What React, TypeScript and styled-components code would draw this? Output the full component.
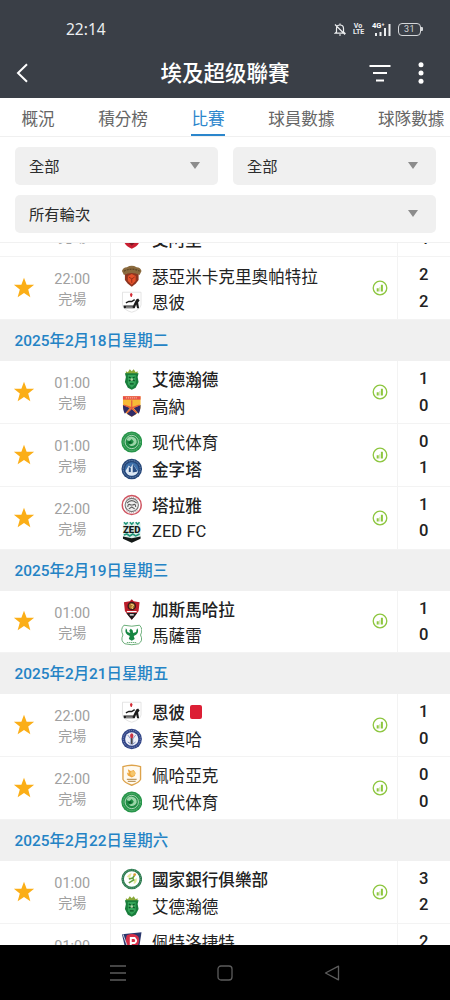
import React from 'react';
import styled, { createGlobalStyle } from 'styled-components';

type CrestName =
    | 'ahly' | 'ceramica' | 'enppi' | 'ittihad' | 'gouna' | 'modern' | 'pyramids'
    | 'talaea' | 'zed' | 'ghazl' | 'masry' | 'smouha' | 'pharco' | 'bank' | 'petrojet';

interface Team {
    name: string;
    crest: CrestName;
    score: number;
    winner?: boolean;
    redCard?: boolean;
}

interface Match {
    time: string;
    home: Team;
    away: Team;
}

interface MatchDay {
    date?: string;
    matches: Match[];
}

const GlobalStyle = createGlobalStyle`
  * {
    box-sizing: border-box;
  }

  body {
    margin: 0;
    background: #fff;
    font-family: Roboto, 'Noto Sans CJK TC', sans-serif;
  }
`;

const Screen = styled.div`
  display: flex;
  flex-direction: column;
  width: 450px;
  height: 1000px;
  overflow: hidden;
  background: #fff;
`;

const TopArea = styled.header`
  flex: none;
  height: 98px;
  background: #3a3f47;
  color: #fff;
`;

const StatusBar = styled.div`
  display: flex;
  align-items: center;
  justify-content: space-between;
  height: 46px;
  padding: 12px 27px 0 66px;
`;

const Clock = styled.span`
  font-family: 'Noto Sans', sans-serif;
  font-size: 15.5px;
  line-height: 20px;
  color: #eceef0;
`;

const StatusIcons = styled.div`
  display: flex;
  align-items: center;
`;

const VoLte = styled.span`
  display: flex;
  flex-direction: column;
  width: 10px;
  margin: 0 9px 0 7px;
  font-size: 7px;
  font-weight: 700;
  line-height: 6.5px;
  text-align: center;
  color: #eceef0;
`;

const Network = styled.span`
  position: relative;
  width: 19px;
  height: 14px;
  margin-right: 7px;
`;

const NetworkLabel = styled.span`
  position: absolute;
  top: 0;
  left: 0;
  font-size: 7.5px;
  font-weight: 700;
  line-height: 7px;
  white-space: nowrap;
`;

const Battery = styled.span`
  display: flex;
  align-items: center;
  justify-content: center;
  width: 23px;
  height: 13px;
  border: 1.5px solid #d4d6d9;
  border-radius: 4px;
  font-size: 9px;
  line-height: 9px;
  letter-spacing: 0.4px;
  color: #d4d6d9;
`;

const BatteryTip = styled.span`
  width: 2px;
  height: 4px;
  border-radius: 0 1px 1px 0;
  background: #d4d6d9;
`;

const TitleBar = styled.div`
  display: grid;
  grid-template-columns: 70px 1fr 70px;
  align-items: center;
  height: 52px;
  padding: 1px 16px 0;
`;

const Title = styled.h1`
  margin: 0;
  padding-top: 2px;
  font-size: 21.5px;
  font-weight: 500;
  line-height: 30px;
  text-align: center;
  white-space: nowrap;
`;

const TitleActions = styled.div`
  display: flex;
  align-items: center;
  justify-content: flex-end;
  gap: 23px;
  padding-right: 4px;
`;

const Tabs = styled.nav`
  display: flex;
  flex: none;
  gap: 43.5px;
  height: 39px;
  padding-left: 21.5px;
  border-bottom: 1px solid #f0f0f0;
  overflow: hidden;
`;

const Tab = styled.div<{ $active?: boolean }>`
  flex: none;
  height: 39px;
  border-bottom: 3px solid ${({ $active }) => ($active ? '#2b86cc' : 'transparent')};
  font-size: 16.6px;
  line-height: 43px;
  white-space: nowrap;
  color: ${({ $active }) => ($active ? '#2b86cc' : '#666')};
`;

const Filters = styled.div`
  display: grid;
  flex: none;
  grid-template-columns: 1fr 1fr;
  gap: 10px 15px;
  height: 104.5px;
  padding: 10px 14.5px 9px;
`;

const Select = styled.div<{ $wide?: boolean }>`
  display: flex;
  grid-column: ${({ $wide }) => ($wide ? '1 / -1' : 'auto')};
  align-items: center;
  justify-content: space-between;
  height: 38px;
  padding: 0 18px 2px 14.5px;
  border-radius: 5px;
  background: #f0f0f0;
  font-size: 15.3px;
  color: #2c2c2c;
`;

const Caret = styled.span`
  margin-top: 1px;
  border-top: 7px solid #8c8c8c;
  border-right: 5.5px solid transparent;
  border-left: 5.5px solid transparent;
`;

const List = styled.main`
  flex: 1;
  min-height: 0;
  overflow: hidden;
  border-top: 1px solid #f1f1f1;
`;

/* the list is scrolled so that the first match is mostly above the fold */
const Scrolled = styled.div`
  margin-top: -48px;
`;

const DateHeading = styled.h2`
  height: 40.9px;
  margin: 0;
  padding-left: 14.5px;
  background: #f0f0f0;
  font-size: 15.4px;
  font-weight: 500;
  line-height: 42px;
  color: #2483c5;
`;

const Row = styled.article`
  display: grid;
  grid-template-columns: 48px 62.5px 1fr 34px 52.5px;
  height: 62.85px;
  border-bottom: 1px solid #f3f3f3;
`;

const StarCell = styled.div`
  display: flex;
  align-items: center;
  justify-content: center;
`;

const TimeCell = styled.div`
  display: flex;
  flex-direction: column;
  align-items: center;
  padding: 13px 13px 0 0;
  border-right: 1px solid #f0f0f0;
  font-size: 14px;
  line-height: 20px;
  color: #a0a0a0;
`;

const KickOff = styled.span`
  height: 20px;
  font-size: 14.4px;
`;

const Status = styled.span`
  height: 20px;
  line-height: 19px;
`;

const Teams = styled.div`
  display: flex;
  flex-direction: column;
  padding: 5px 0 0 10px;
`;

const TeamLine = styled.div<{ $winner?: boolean }>`
  display: flex;
  align-items: center;
  height: 26.5px;
  font-size: 16.6px;
  font-weight: ${({ $winner }) => ($winner ? 500 : 400)};
  white-space: nowrap;
  color: #222;

  svg {
    flex: none;
    margin-right: 10px;
  }
`;

const RedCard = styled.span`
  width: 12px;
  height: 14px;
  margin-left: 5px;
  border-radius: 2px;
  background: #dc1f35;
`;

const StatsCell = styled.div`
  display: flex;
  align-items: center;
  justify-content: center;
  border-right: 1px solid #f3f3f3;
`;

const Scores = styled.div`
  display: flex;
  flex-direction: column;
  align-items: center;
  padding-top: 5px;
  font-size: 16.6px;
  font-weight: 500;
  line-height: 26.5px;
  color: #222;
`;

const NavBar = styled.footer`
  display: flex;
  flex: none;
  align-items: center;
  justify-content: center;
  gap: 91px;
  height: 55px;
  background: #000;
`;

const crests: Record<CrestName, React.ReactNode> = {
    ahly: (
        <>
            <path d="M3 2h16v11q-1 5-8 8q-7-3-8-8z" fill="#c91f32" />
            <path d="M6 13h10l-5 5z" fill="#7d1722" />
        </>
    ),
    ceramica: (
        <>
            <path d="M4 9q7-4 14 0v6l-3 4-4 3-4-3-3-4z" fill="#8d3520" />
            <path d="M1 6Q2 2 6 2q5-3 10 0q4 0 5 4l-2 4q-8-4-16 0z" fill="#8a6a3e" />
            <path d="M3 6q8-4 16 0" fill="none" stroke="#5d4526" strokeWidth="1.2" strokeDasharray="2 1" />
            <path d="M7 11l4-2 4 2v5l-4 4-4-4z" fill="#e4512a" />
            <path d="M8 12l3 2 3-2M11 14v4" fill="none" stroke="#9b2c17" />
        </>
    ),
    enppi: (
        <>
            <path d="M1.500 1h19v13q-1 5-9.500 7.500Q2.500 19 1.500 14z" fill="#fff" stroke="#ddd" strokeWidth=".8" />
            <path d="M10.500 2v4" stroke="#d32c35" strokeWidth="1.300" />
            <circle cx="10.500" cy="3.700" r="1.300" fill="#d32c35" />
            <path d="M2.500 14.500h10l3-6 2-1 1.500 2-1.500 2 1 6h-2l-1-4-1.500 4h-11z" fill="#1c1c1c" />
            <path d="M5 12l3-1.500h3l3-2" fill="none" stroke="#1c1c1c" strokeWidth="1.400" />
            <path d="M5 16.200h7" stroke="#fff" strokeWidth=".8" />
        </>
    ),
    ittihad: (
        <>
            <path d="M5 3l2 1 2-3 2 2 2-2 2 3 2-1v3H5z" fill="#89a838" />
            <path d="M4 5h14l-1 4 1 5-3 6-4 2-4-2-3-6 1-5z" fill="#187d3b" />
            <path d="M7 7h8v9l-4 4-4-4z" fill="#35a559" />
            <path d="M8 9l2 1M14 9l-2 1M8 13q3-2 6 0M9 16h4" stroke="#0b5425" strokeWidth="1.300" fill="none" />
            <circle cx="11" cy="11.500" r="1.300" fill="#b8d7a8" />
        </>
    ),
    gouna: (
        <>
            <path d="M2 1h18v12q-1 5-9 9q-8-4-9-9z" fill="#f6bb37" />
            <path d="M2 1h18v3.500H2z" fill="#e8504b" />
            <path d="M2 10l7 3-5 6q-2-3-2-9zM20 10l-7 3 5 6q2-3 2-9zM11 14l5 5-5 3-5-3z" fill="#302b67" />
            <path d="M11 5v9M6 18l5-5 5 5M3 10l8 3 8-3" fill="none" stroke="#e45b42" strokeWidth="1.300" />
            <path d="M5 2.700h12" stroke="#fbd3a0" strokeDasharray="1.200 .8" />
        </>
    ),
    modern: (
        <>
            <circle cx="11" cy="11" r="10.700" fill="#27954a" />
            <circle cx="11" cy="11" r="8.800" fill="none" stroke="#6dbb84" strokeDasharray="1 1" />
            <circle cx="11" cy="11" r="6.800" fill="#1f8b43" stroke="#cfe8d5" strokeWidth=".8" />
            <path d="M5.500 9q2-4 6-3.500q5 1 4.500 6q-1.500 4-6 3.500l-2-1.500q4.500 0 5-3l-2-2.500-2.500 2z" fill="#9bd6a8" />
            <path d="M7 11l3-1 1 2-2 1z" fill="#0d602b" />
        </>
    ),
    pyramids: (
        <>
            <circle cx="11" cy="11" r="10.500" fill="#254678" />
            <circle cx="11" cy="11" r="8.700" fill="none" stroke="#7792b9" strokeDasharray="1 .8" />
            <circle cx="11" cy="11" r="7" fill="#3d6fa9" />
            <path d="M4.500 13L8 7.500l2 2 2-4 5.500 8q-2 4.500-6.500 4.500t-6.500-5z" fill="#dce7f3" />
            <path d="M12 5.500v9l5-1zM8 9v5h2v-4z" fill="#294d82" />
        </>
    ),
    talaea: (
        <>
            <circle cx="11" cy="11" r="9.700" fill="#fff" stroke="#cf5360" strokeWidth="1.500" />
            <circle cx="11" cy="11" r="6.800" fill="#eee" stroke="#777" strokeWidth="1.100" />
            <path d="M6 9q5-5 10 0M7 13q0-4 3-2h2q3-2 3 2M8 15l3-2 3 2" fill="none" stroke="#5c5c5c" strokeWidth="1.100" />
            <path d="M5 5.500q6-5 12 0M5 16.500q6 5 12 0" fill="none" stroke="#a98b8d" strokeDasharray="1 1" />
        </>
    ),
    zed: (
        <>
            <path d="M2 2h18v15l-9 5-9-5z" fill="#dbeee8" />
            <path d="M3 1l2 2 2-2M9 1l2 2 2-2M15 1l2 2 2-2M3 14l3-1 3 2 3-2 3 2 4-2" fill="none" stroke="#20977a" strokeWidth="1.700" />
            <path d="M2 15.500l9 2 9-2v2.500l-9 4-9-4z" fill="#141918" />
            <text x="11" y="12" textAnchor="middle" textLength="18" lengthAdjust="spacingAndGlyphs" fontFamily="Roboto" fontSize="9" fontWeight="900" fill="#141918">ZED</text>
        </>
    ),
    ghazl: (
        <>
            <path d="M11 1l2 2 6 1-1 9-3 4-4 5-4-5-3-4-1-9 6-1z" fill="#bc1d29" />
            <circle cx="11" cy="8" r="4.400" fill="#3a171b" />
            <circle cx="11" cy="8" r="3" fill="#b0742d" />
            <path d="M10 6l3 1-2 2 1 2" fill="none" stroke="#f2d47b" />
            <path d="M5.500 15h11l-2 3-3.500 4-3.500-4z" fill="#201c1e" />
            <path d="M6 13.700h10M9 17h4" stroke="#fff" strokeWidth="1.200" />
        </>
    ),
    masry: (
        <>
            <path d="M3 1q8 2 16 0q4 4 1 10q3 6-2 9q-7 2-14 0q-5-3-2-9q-3-6 1-10z" fill="#fff" stroke="#58a368" strokeWidth=".9" />
            <path d="M5 4Q3 10 9 12l-1 3 3 2 3-2-1-3q6-2 4-8q-1.500 1-1.500 4l-3 1q0-3.500-2.500-4.500l-1.500 2 1 2.500-3-1q0-3-1.500-4z" fill="#168642" />
            <path d="M6 18.700h10" stroke="#6cae79" strokeDasharray="1.500 .5" />
        </>
    ),
    smouha: (
        <>
            <circle cx="11" cy="11" r="10.400" fill="#304486" />
            <circle cx="11" cy="11" r="8.700" fill="none" stroke="#8c98c2" strokeDasharray="1 1" />
            <circle cx="11" cy="11" r="6.800" fill="#eef0f8" />
            <path d="M7 7l3 4v5M15 7l-3 4v5M7 14l4 3 4-3" fill="none" stroke="#8794be" />
            <path d="M11 10v6" stroke="#444" strokeWidth="1.500" />
            <ellipse cx="11" cy="7.800" rx="1.700" ry="2.600" fill="#c93445" />
        </>
    ),
    pharco: (
        <>
            <path d="M2 2.500q9-3 18 0v13q-1 3-9 6q-8-3-9-6z" fill="#fffaf0" stroke="#dda34b" strokeWidth="1.400" />
            <path d="M7 5l3 2 3-1 2 3-1 3-3 1.500-4-2-1-3 2 1z" fill="#eda63c" />
            <circle cx="12" cy="9.500" r="2.500" fill="#f6c76b" />
            <path d="M6 15.500h10M7 17.500h8" stroke="#bd9a62" strokeWidth="1.100" />
        </>
    ),
    bank: (
        <>
            <circle cx="11" cy="11" r="9.300" fill="#fff" stroke="#2b7a4e" strokeWidth="2.600" />
            <circle cx="11" cy="11" r="9.300" fill="none" stroke="#8db99d" strokeWidth=".7" strokeDasharray="1 1" />
            <path d="M6 9q2-4 5-4l-2 5zM13 16q4-1 3-6l-3 2z" fill="#e6e79b" />
            <path d="M14 7l-2 3-4 1M12 10l1 2-5 3" fill="none" stroke="#65a13e" strokeWidth="1.600" />
            <circle cx="14" cy="6.500" r="1.400" fill="#df9c35" />
        </>
    ),
    petrojet: (
        <>
            <path d="M1 3l20-2-2 13-8 8-7-6z" fill="#29366c" />
            <path d="M6 4q8-3 12 2 2 7-4 12l-6-1q-5-6-2-13z" fill="#d62f48" />
            <path d="M10 17V7h4q3 3 0 5h-4" fill="none" stroke="#fff" strokeWidth="2" />
            <path d="M2 3l5 14" stroke="#dce0ee" strokeWidth=".9" />
        </>
    ),
};

const Crest: React.FC<{ name: CrestName }> = ({ name }) => (
    <svg width="21.5" height="22" viewBox="0 0 22 22">{crests[name]}</svg>
);

const Star = () => (
    <svg width="22" height="22" viewBox="0 0 22 22">
        <path d="M11 .8l2.650 7h7.500l-5.950 4.700 2.150 7.800L11 15.900l-6.350 4.400 2.150-7.800L.85 7.800h7.500z" fill="#fbae17" />
    </svg>
);

const StatsIcon = () => (
    <svg width="16" height="16" viewBox="0 0 16 16" fill="none" stroke="#8dc63f">
        <circle cx="8" cy="8" r="6.800" strokeWidth="1.300" />
        <path d="M5.700 8.200v3.300M9.900 4.800v6.700" strokeWidth="2" />
        <path d="M7.800 7.200v4.300" strokeWidth="1" strokeOpacity=".5" />
    </svg>
);

const MutedBell = () => (
    <svg width="12" height="13" viewBox="0 0 12 13" fill="none" stroke="#eceef0" strokeWidth="1.200">
        <path d="M2.500 9V5.500Q2.500 2 6 2t3.500 3.500V9l1.300 1.200H1.200zM6 .6V2M5 12h2M1 1.500l10 10" />
    </svg>
);

const seasonDays: MatchDay[] = [
    {
        matches: [
            {
                time: '22:00',
                home: { name: '塔拉雅', crest: 'talaea', score: 0 },
                away: { name: '艾阿里', crest: 'ahly', score: 4, winner: true },
            },
            {
                time: '22:00',
                home: { name: '瑟亞米卡克里奧帕特拉', crest: 'ceramica', score: 2 },
                away: { name: '恩彼', crest: 'enppi', score: 2 },
            },
        ],
    },
    {
        date: '2025年2月18日星期二',
        matches: [
            {
                time: '01:00',
                home: { name: '艾德瀚德', crest: 'ittihad', score: 1, winner: true },
                away: { name: '高納', crest: 'gouna', score: 0 },
            },
            {
                time: '01:00',
                home: { name: '现代体育', crest: 'modern', score: 0 },
                away: { name: '金字塔', crest: 'pyramids', score: 1, winner: true },
            },
            {
                time: '22:00',
                home: { name: '塔拉雅', crest: 'talaea', score: 1, winner: true },
                away: { name: 'ZED FC', crest: 'zed', score: 0 },
            },
        ],
    },
    {
        date: '2025年2月19日星期三',
        matches: [
            {
                time: '01:00',
                home: { name: '加斯馬哈拉', crest: 'ghazl', score: 1, winner: true },
                away: { name: '馬薩雷', crest: 'masry', score: 0 },
            },
        ],
    },
    {
        date: '2025年2月21日星期五',
        matches: [
            {
                time: '22:00',
                home: { name: '恩彼', crest: 'enppi', score: 1, winner: true, redCard: true },
                away: { name: '索莫哈', crest: 'smouha', score: 0 },
            },
            {
                time: '22:00',
                home: { name: '佩哈亞克', crest: 'pharco', score: 0 },
                away: { name: '现代体育', crest: 'modern', score: 0 },
            },
        ],
    },
    {
        date: '2025年2月22日星期六',
        matches: [
            {
                time: '01:00',
                home: { name: '國家銀行俱樂部', crest: 'bank', score: 3, winner: true },
                away: { name: '艾德瀚德', crest: 'ittihad', score: 2 },
            },
            {
                time: '01:00',
                home: { name: '佩特洛捷特', crest: 'petrojet', score: 2 },
                away: { name: '高納', crest: 'gouna', score: 2 },
            },
        ],
    },
];

const tabs = ['概況', '積分榜', '比賽', '球員數據', '球隊數據'];

const TeamRow: React.FC<{ team: Team }> = ({ team }) => (
    <TeamLine $winner={team.winner}>
        <Crest name={team.crest} />
        {team.name}
        {team.redCard && <RedCard />}
    </TeamLine>
);

const MatchRow: React.FC<{ match: Match }> = ({ match }) => (
    <Row>
        <StarCell><Star /></StarCell>
        <TimeCell>
            <KickOff>{match.time}</KickOff>
            <Status>完場</Status>
        </TimeCell>
        <Teams>
            <TeamRow team={match.home} />
            <TeamRow team={match.away} />
        </Teams>
        <StatsCell><StatsIcon /></StatsCell>
        <Scores>
            <span>{match.home.score}</span>
            <span>{match.away.score}</span>
        </Scores>
    </Row>
);

const App: React.FC = () => {
    return (
        <>
            <GlobalStyle />
            <Screen>
                <TopArea>
                    <StatusBar>
                        <Clock>22:14</Clock>
                        <StatusIcons>
                            <MutedBell />
                            <VoLte>
                                <span>Vo</span>
                                <span>LTE</span>
                            </VoLte>
                            <Network>
                                <NetworkLabel>4G⁺</NetworkLabel>
                                <svg width="19" height="14" viewBox="0 0 19 14" fill="#eceef0">
                                    <path d="M3 10h2v3H3zM7.500 9h2v4h-2zM12 5h2v8h-2zM16.500 1h2v12h-2z" />
                                </svg>
                            </Network>
                            <Battery>31</Battery>
                            <BatteryTip />
                        </StatusIcons>
                    </StatusBar>
                    <TitleBar>
                        <svg width="13" height="20" viewBox="0 0 13 20" fill="none" stroke="#fff" strokeWidth="2">
                            <path d="M11 1.200L2 10l9 8.800" />
                        </svg>
                        <Title>埃及超级聯賽</Title>
                        <TitleActions>
                            <svg width="22" height="18" viewBox="0 0 22 18" stroke="#fff" strokeWidth="2">
                                <path d="M.5 2h21M4 9h14M7 16.500h8" />
                            </svg>
                            <svg width="16" height="22" viewBox="0 0 16 22" fill="#fff">
                                <circle cx="7" cy="2.700" r="2.500" />
                                <circle cx="7" cy="11" r="2.500" />
                                <circle cx="7" cy="19.300" r="2.500" />
                            </svg>
                        </TitleActions>
                    </TitleBar>
                </TopArea>
                <Tabs>
                    {tabs.map((label) => (
                        <Tab key={label} $active={label === '比賽'}>{label}</Tab>
                    ))}
                </Tabs>
                <Filters>
                    <Select>全部<Caret /></Select>
                    <Select>全部<Caret /></Select>
                    <Select $wide>所有輪次<Caret /></Select>
                </Filters>
                <List>
                    <Scrolled>
                        {seasonDays.map((day, index) => (
                            <section key={index}>
                                {day.date && <DateHeading>{day.date}</DateHeading>}
                                {day.matches.map((match, i) => (
                                    <MatchRow key={i} match={match} />
                                ))}
                            </section>
                        ))}
                    </Scrolled>
                </List>
                <NavBar>
                    <svg width="16" height="16" viewBox="0 0 16 16" stroke="#5c5c5c" strokeWidth="1.300">
                        <path d="M0 1h16M0 8h16M0 15h16" />
                    </svg>
                    <svg width="16" height="16" viewBox="0 0 16 16" fill="none" stroke="#5c5c5c" strokeWidth="1.300">
                        <rect x="1" y="1" width="14" height="14" rx="3" />
                    </svg>
                    <svg width="16" height="16" viewBox="0 0 16 16" fill="none" stroke="#5c5c5c" strokeWidth="1.300">
                        <path d="M1.500 8L14.500 1.200v13.600z" strokeLinejoin="round" />
                    </svg>
                </NavBar>
            </Screen>
        </>
    );
};

export default App;
